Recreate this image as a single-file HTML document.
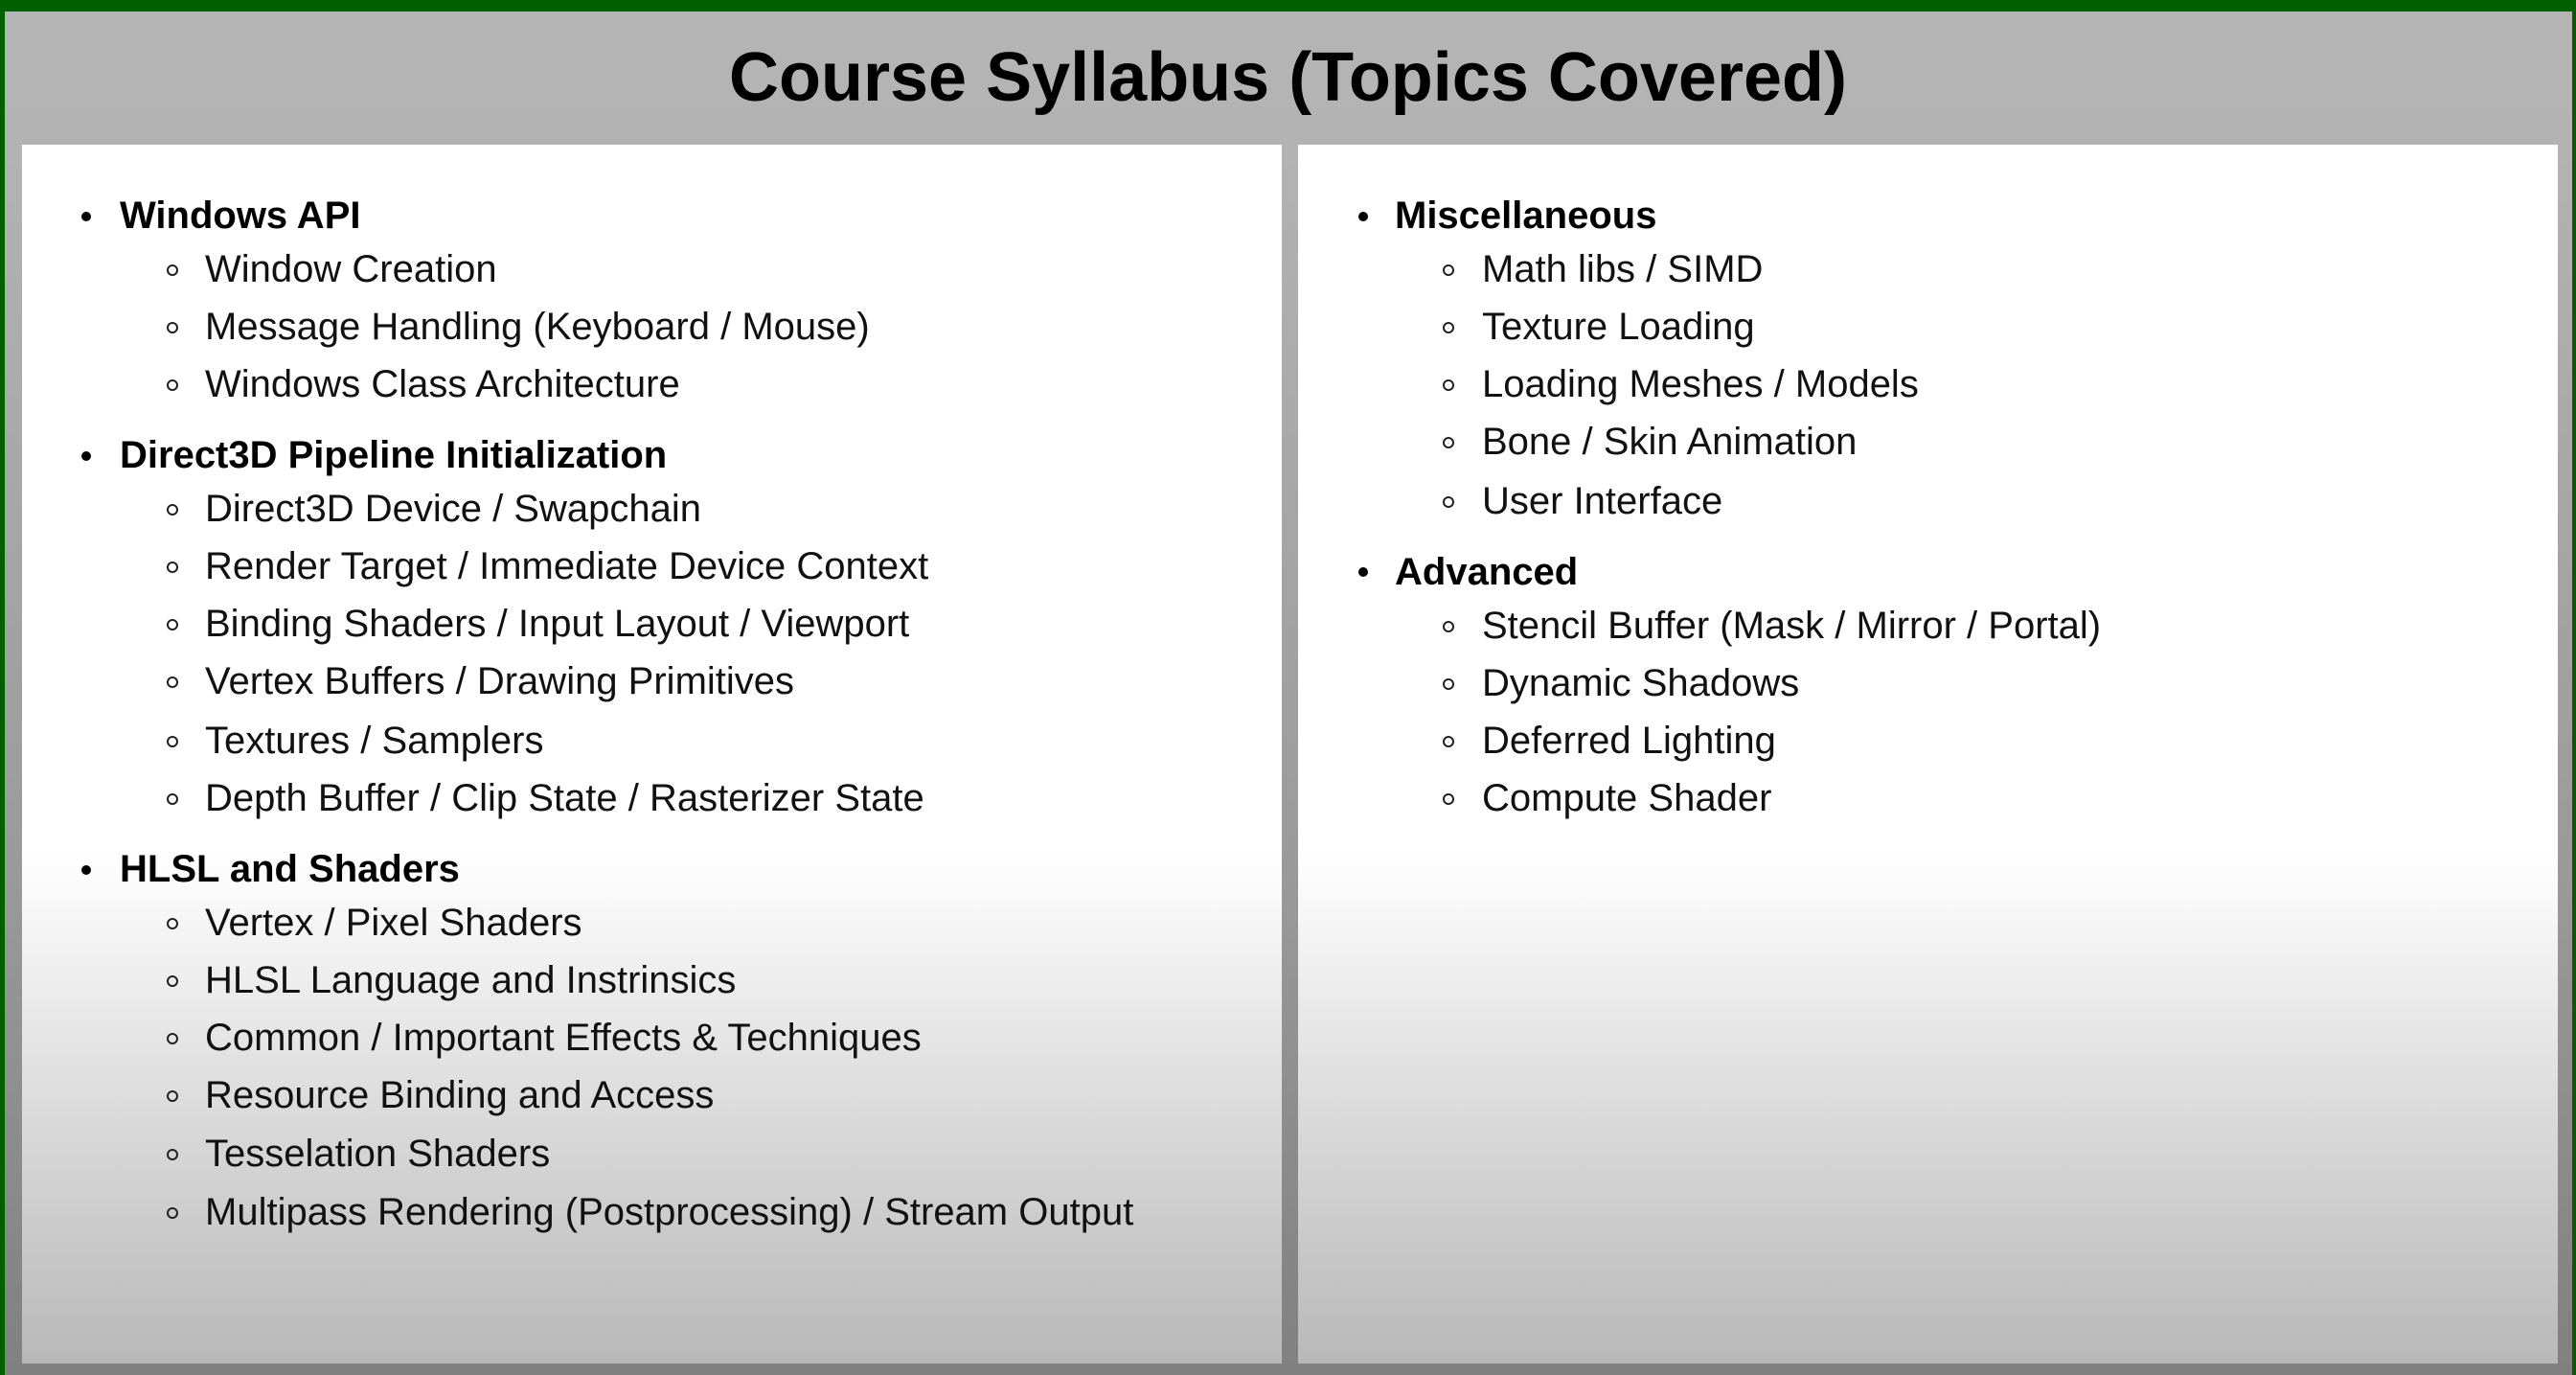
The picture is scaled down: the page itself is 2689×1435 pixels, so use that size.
<!DOCTYPE html>
<html><head><meta charset="utf-8"><style>
html,body{margin:0;padding:0;}
body{width:2689px;height:1435px;position:relative;overflow:hidden;background:#006000;font-family:"Liberation Sans",Arial,sans-serif;}
.bg{position:absolute;left:5px;top:12px;right:4px;bottom:0;background:linear-gradient(#b4b4b4 0px,#b3b3b3 150px,#9a9a9a 900px,#808080 1423px);}
.title{position:absolute;left:0;right:0;top:36px;text-align:center;font-weight:bold;font-size:72px;color:#000;line-height:90px;}
.panel{position:absolute;top:151px;height:1272px;background:linear-gradient(#fff 0px,#fff 740px,#dcdcdc 1000px,#b8b8b8 1272px);}
.l{position:absolute;font-size:40px;line-height:60px;color:#111;white-space:nowrap;}
.h{font-weight:bold;color:#000;}
.b{position:absolute;width:10px;height:10px;border-radius:50%;background:#000;}
.c{position:absolute;width:8px;height:8px;border-radius:50%;border:2px solid #222;}
</style></head><body>
<div class="bg"></div>
<div class="title">Course Syllabus (Topics Covered)</div>
<div class="panel" style="left:23px;width:1315px;"></div>
<div class="panel" style="left:1355px;width:1315px;"></div>

<div class="b" style="left:85px;top:221px"></div><div class="l h" style="left:125px;top:195px">Windows API</div>
<div class="c" style="left:174px;top:276px"></div><div class="l" style="left:214px;top:251px">Window Creation</div>
<div class="c" style="left:174px;top:336px"></div><div class="l" style="left:214px;top:311px">Message Handling (Keyboard / Mouse)</div>
<div class="c" style="left:174px;top:396px"></div><div class="l" style="left:214px;top:371px">Windows Class Architecture</div>

<div class="b" style="left:85px;top:471px"></div><div class="l h" style="left:125px;top:445px">Direct3D Pipeline Initialization</div>
<div class="c" style="left:174px;top:526px"></div><div class="l" style="left:214px;top:501px">Direct3D Device / Swapchain</div>
<div class="c" style="left:174px;top:586px"></div><div class="l" style="left:214px;top:561px">Render Target / Immediate Device Context</div>
<div class="c" style="left:174px;top:646px"></div><div class="l" style="left:214px;top:621px">Binding Shaders / Input Layout / Viewport</div>
<div class="c" style="left:174px;top:706px"></div><div class="l" style="left:214px;top:681px">Vertex Buffers / Drawing Primitives</div>
<div class="c" style="left:174px;top:768px"></div><div class="l" style="left:214px;top:743px">Textures / Samplers</div>
<div class="c" style="left:174px;top:828px"></div><div class="l" style="left:214px;top:803px">Depth Buffer / Clip State / Rasterizer State</div>

<div class="b" style="left:85px;top:903px"></div><div class="l h" style="left:125px;top:877px">HLSL and Shaders</div>
<div class="c" style="left:174px;top:958px"></div><div class="l" style="left:214px;top:933px">Vertex / Pixel Shaders</div>
<div class="c" style="left:174px;top:1018px"></div><div class="l" style="left:214px;top:993px">HLSL Language and Instrinsics</div>
<div class="c" style="left:174px;top:1078px"></div><div class="l" style="left:214px;top:1053px">Common / Important Effects &amp; Techniques</div>
<div class="c" style="left:174px;top:1138px"></div><div class="l" style="left:214px;top:1113px">Resource Binding and Access</div>
<div class="c" style="left:174px;top:1199px"></div><div class="l" style="left:214px;top:1174px">Tesselation Shaders</div>
<div class="c" style="left:174px;top:1260px"></div><div class="l" style="left:214px;top:1235px">Multipass Rendering (Postprocessing) / Stream Output</div>

<div class="b" style="left:1418px;top:221px"></div><div class="l h" style="left:1456px;top:195px">Miscellaneous</div>
<div class="c" style="left:1506px;top:276px"></div><div class="l" style="left:1547px;top:251px">Math libs / SIMD</div>
<div class="c" style="left:1506px;top:336px"></div><div class="l" style="left:1547px;top:311px">Texture Loading</div>
<div class="c" style="left:1506px;top:396px"></div><div class="l" style="left:1547px;top:371px">Loading Meshes / Models</div>
<div class="c" style="left:1506px;top:456px"></div><div class="l" style="left:1547px;top:431px">Bone / Skin Animation</div>
<div class="c" style="left:1506px;top:518px"></div><div class="l" style="left:1547px;top:493px">User Interface</div>

<div class="b" style="left:1418px;top:592px"></div><div class="l h" style="left:1456px;top:567px">Advanced</div>
<div class="c" style="left:1506px;top:648px"></div><div class="l" style="left:1547px;top:623px">Stencil Buffer (Mask / Mirror / Portal)</div>
<div class="c" style="left:1506px;top:708px"></div><div class="l" style="left:1547px;top:683px">Dynamic Shadows</div>
<div class="c" style="left:1506px;top:768px"></div><div class="l" style="left:1547px;top:743px">Deferred Lighting</div>
<div class="c" style="left:1506px;top:828px"></div><div class="l" style="left:1547px;top:803px">Compute Shader</div>
</body></html>
